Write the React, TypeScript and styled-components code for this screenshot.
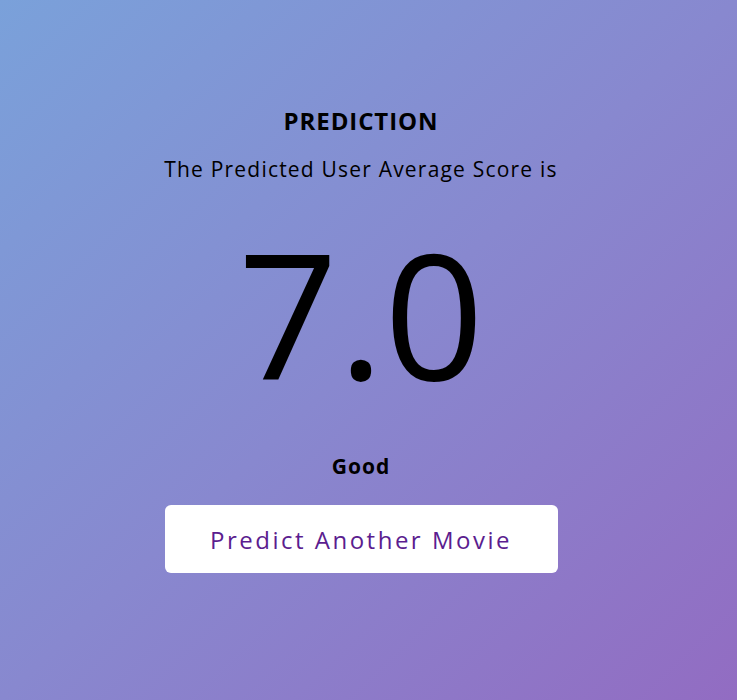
import React from "react";
import styled, { createGlobalStyle } from "styled-components";

const Global = createGlobalStyle`
  html, body { margin: 0; padding: 0; }
  body { font-family: "Open Sans", "Noto Sans", sans-serif; }
`;

const Page = styled.div`
  width: 737px;
  height: 700px;
  background: linear-gradient(to bottom right, #7aa1da 0%, #8888cf 50%, #926cc2 100%);
  box-sizing: border-box;
  padding-right: 15px;
  color: #000;
`;

const Column = styled.main`
  display: flex;
  flex-direction: column;
  align-items: center;
  padding-top: 104px;
`;

const Title = styled.h2`
  margin: 0;
  font-weight: 700;
  font-size: 24px;
  line-height: 34px;
  letter-spacing: 0.9px;
`;

const Subtitle = styled.p`
  margin: 17px 0 0;
  font-size: 21px;
  line-height: 28px;
  letter-spacing: 1.2px;
`;

const Score = styled.div`
  margin-top: 29px;
  font-size: 175px;
  line-height: 200px;
  font-weight: 400;
`;

const Label = styled.div`
  margin-top: 40px;
  font-weight: 700;
  font-size: 21px;
  line-height: 28px;
  letter-spacing: 1px;
`;

const Button = styled.button`
  margin-top: 25px;
  width: 393px;
  height: 68px;
  border: none;
  border-radius: 6px;
  background: #fff;
  color: #5b1d8f;
  font-family: "Open Sans", sans-serif;
  font-size: 24px;
  letter-spacing: 2.5px;
  cursor: pointer;
`;

export default function App() {
  return (
    <>
      <Global />
      <Page>
        <Column>
          <Title>PREDICTION</Title>
          <Subtitle>The Predicted User Average Score is</Subtitle>
          <Score>7.0</Score>
          <Label>Good</Label>
          <Button>Predict Another Movie</Button>
        </Column>
      </Page>
    </>
  );
}
